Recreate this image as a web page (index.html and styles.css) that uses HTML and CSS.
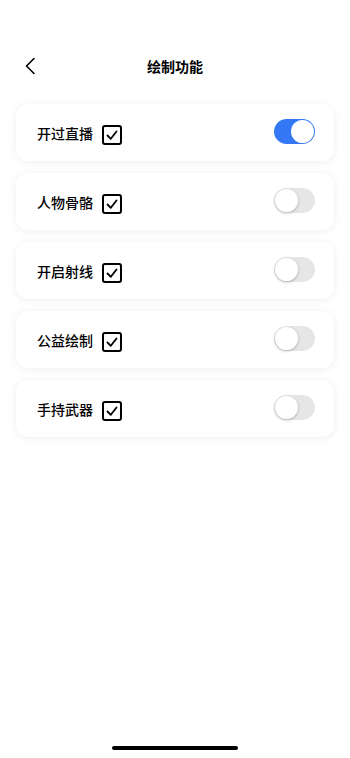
FILE: index.html
```html
<!DOCTYPE html>
<html lang="zh">
<head>
<meta charset="utf-8">
<link rel="stylesheet" href="styles.css">
</head>
<body>
<div class="page">
  <header class="nav">
    <svg class="back" width="12" height="18" viewBox="0 0 12 18"><path d="M10 1.5 L2.5 9 L10 16.5" fill="none" stroke="#000" stroke-width="1.6" stroke-linecap="round" stroke-linejoin="round"/></svg>
    <h1 class="title">绘制功能</h1>
  </header>
  <main class="list">
    <div class="card">
      <span class="label">开过直播</span>
      <span class="check"><svg width="14" height="14" viewBox="0 0 14 14"><path d="M2.5 7.5 L5.8 10.8 L11.5 3.5" fill="none" stroke="#000" stroke-width="1.8" stroke-linecap="round" stroke-linejoin="round"/></svg></span>
      <span class="toggle on"><span class="knob"></span></span>
    </div>
    <div class="card">
      <span class="label">人物骨骼</span>
      <span class="check"><svg width="14" height="14" viewBox="0 0 14 14"><path d="M2.5 7.5 L5.8 10.8 L11.5 3.5" fill="none" stroke="#000" stroke-width="1.8" stroke-linecap="round" stroke-linejoin="round"/></svg></span>
      <span class="toggle"><span class="knob"></span></span>
    </div>
    <div class="card">
      <span class="label">开启射线</span>
      <span class="check"><svg width="14" height="14" viewBox="0 0 14 14"><path d="M2.5 7.5 L5.8 10.8 L11.5 3.5" fill="none" stroke="#000" stroke-width="1.8" stroke-linecap="round" stroke-linejoin="round"/></svg></span>
      <span class="toggle"><span class="knob"></span></span>
    </div>
    <div class="card">
      <span class="label">公益绘制</span>
      <span class="check"><svg width="14" height="14" viewBox="0 0 14 14"><path d="M2.5 7.5 L5.8 10.8 L11.5 3.5" fill="none" stroke="#000" stroke-width="1.8" stroke-linecap="round" stroke-linejoin="round"/></svg></span>
      <span class="toggle"><span class="knob"></span></span>
    </div>
    <div class="card">
      <span class="label">手持武器</span>
      <span class="check"><svg width="14" height="14" viewBox="0 0 14 14"><path d="M2.5 7.5 L5.8 10.8 L11.5 3.5" fill="none" stroke="#000" stroke-width="1.8" stroke-linecap="round" stroke-linejoin="round"/></svg></span>
      <span class="toggle"><span class="knob"></span></span>
    </div>
  </main>
  <div class="home-bar"></div>
</div>
</body>
</html>
```
FILE: styles.css
```css
* { box-sizing: border-box; }
html, body { margin: 0; padding: 0; background: #fff; }
body {
  font-family: "Noto Sans CJK SC", "Noto Sans", sans-serif;
  color: #000;
  width: 350px;
  height: 758px;
  overflow: hidden;
}
.page {
  position: relative;
  height: 758px;
  display: flex;
  flex-direction: column;
}
.nav {
  position: relative;
  height: 32px;
  margin-top: 50px;
  display: flex;
  align-items: center;
  justify-content: center;
}
.back {
  position: absolute;
  left: 24px;
  top: 7px;
}
.title {
  margin: 0;
  font-size: 14px;
  font-weight: 700;
  line-height: 32px;
}
.list {
  margin-top: 22px;
  padding: 0 16px;
  display: flex;
  flex-direction: column;
  gap: 12px;
}
.card {
  height: 57px;
  border-radius: 12px;
  background: #fff;
  box-shadow: 0 1px 8px rgba(0, 0, 0, 0.07);
  display: flex;
  align-items: center;
  padding: 0 19px 0 21px;
}
.label {
  font-size: 14px;
  font-weight: 500;
  line-height: 20px;
  margin-top: 1px;
}
.check {
  width: 20px;
  height: 20px;
  margin-left: 9px;
  margin-top: 4px;
  border: 2px solid #000;
  border-radius: 3px;
  display: flex;
  align-items: center;
  justify-content: center;
}
.toggle {
  margin-left: auto;
  width: 41px;
  height: 25px;
  border-radius: 13px;
  background: #e6e6e6;
  display: flex;
  align-items: center;
  padding: 1px;
  margin-top: -2px;
}
.toggle .knob {
  width: 23px;
  height: 23px;
  border-radius: 50%;
  background: #fff;
  box-shadow: 0 1px 3px rgba(0, 0, 0, 0.25);
}
.toggle.on {
  background: #3478f6;
  justify-content: flex-end;
}
.toggle.on .knob { box-shadow: none; }
.home-bar {
  position: absolute;
  left: 112px;
  bottom: 8px;
  width: 126px;
  height: 4px;
  border-radius: 2px;
  background: #000;
}
```
